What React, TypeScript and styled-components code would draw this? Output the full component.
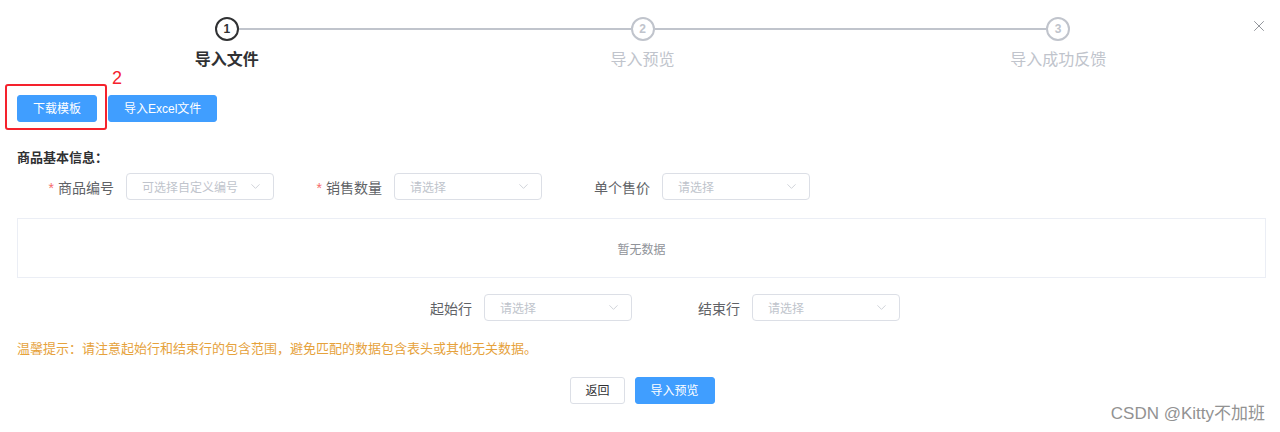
import React from 'react';
import styled, { createGlobalStyle } from 'styled-components';
import { ChevronDown, X } from 'lucide-react';

const GlobalStyle = createGlobalStyle`
  html, body {
    margin: 0;
    padding: 0;
    background: #fff;
  }
  body {
    font-family: "Liberation Sans", "Noto Sans CJK SC", sans-serif;
    color: #606266;
  }
`;

const Dialog = styled.div`
  position: relative;
  width: 1280px;
  height: 432px;
  box-sizing: border-box;
  padding: 0 14px 0 17px;
  overflow: hidden;
  background: #fff;
`;

const CloseBtn = styled.button`
  position: absolute;
  top: 17px;
  right: 12px;
  border: none;
  background: transparent;
  padding: 0;
  display: flex;
  color: #909399;
  cursor: pointer;
`;

const Steps = styled.div`
  display: grid;
  grid-template-columns: repeat(3, 1fr);
  margin: 0 0 0 2px;
  padding-top: 17px;
`;

const Step = styled.div`
  display: flex;
  flex-direction: column;
  align-items: center;
`;

const StepHead = styled.div`
  display: flex;
  align-items: center;
  width: 100%;
  height: 24px;
`;

const StepLine = styled.div<{ $off?: boolean }>`
  flex: 1;
  height: 2px;
  background: ${p => (p.$off ? 'transparent' : '#c0c4cc')};
`;

const StepIcon = styled.div<{ $active?: boolean }>`
  width: 24px;
  height: 24px;
  box-sizing: border-box;
  border-radius: 50%;
  border: 2px solid ${p => (p.$active ? '#303133' : '#c0c4cc')};
  color: ${p => (p.$active ? '#303133' : '#c0c4cc')};
  display: flex;
  align-items: center;
  justify-content: center;
  font-size: 12px;
  font-weight: 700;
  background: #fff;
`;

const StepTitle = styled.div<{ $active?: boolean }>`
  font-size: 16px;
  line-height: 38px;
  font-weight: ${p => (p.$active ? 700 : 400)};
  color: ${p => (p.$active ? '#303133' : '#c0c4cc')};
`;

const Toolbar = styled.div`
  display: flex;
  gap: 11px;
  margin-top: 16px;
`;

const Button = styled.button<{ $plain?: boolean }>`
  height: 27px;
  box-sizing: border-box;
  padding: 0 ${p => (p.$plain ? '14px' : '15px')};
  border-radius: 3px;
  font-family: inherit;
  font-size: 12px;
  line-height: 1;
  cursor: pointer;
  border: 1px solid ${p => (p.$plain ? '#dcdfe6' : '#409eff')};
  background: ${p => (p.$plain ? '#fff' : '#409eff')};
  color: ${p => (p.$plain ? '#303133' : '#fff')};
  white-space: nowrap;
`;

const Marked = styled.span`
  position: relative;
  display: inline-flex;
`;

const MarkBox = styled.span`
  position: absolute;
  top: -11px;
  left: -12px;
  right: -10px;
  bottom: -8px;
  border: 2px solid #f5222d;
  border-radius: 3px;
  pointer-events: none;
`;

const MarkNumber = styled.span`
  position: absolute;
  top: -27px;
  right: -25px;
  font-size: 18px;
  line-height: 20px;
  color: #f5222d;
`;

const SectionTitle = styled.div`
  margin-top: 28px;
  font-size: 13px;
  line-height: 16px;
  font-weight: 700;
  color: #303133;
`;

const FormRow = styled.div<{ $centered?: boolean }>`
  display: flex;
  align-items: center;
  margin-top: ${p => (p.$centered ? '16px' : '7px')};
  padding-left: ${p => (p.$centered ? '347px' : '0')};
  margin-left: ${p => (p.$centered ? '0' : '-11px')};
`;

const FormItem = styled.div<{ $labelWidth: number }>`
  display: flex;
  align-items: center;
  & > label {
    width: ${p => p.$labelWidth}px;
    box-sizing: border-box;
    padding-right: 12px;
    text-align: right;
    font-size: 14px;
    color: #606266;
    white-space: nowrap;
  }
`;

const Required = styled.span`
  color: #f56c6c;
  margin-right: 4px;
`;

const Select = styled.div`
  position: relative;
  width: 148px;
  height: 27px;
  box-sizing: border-box;
  border: 1px solid #dcdfe6;
  border-radius: 4px;
  display: flex;
  align-items: center;
  justify-content: space-between;
  padding: 0 10px 0 15px;
  font-size: 12px;
  color: #c0c4cc;
  background: #fff;
`;

const EmptyTable = styled.div`
  margin-top: 18px;
  height: 60px;
  box-sizing: border-box;
  border: 1px solid #ebeef5;
  display: flex;
  align-items: center;
  justify-content: center;
  font-size: 12px;
  color: #909399;
`;

const Tip = styled.div`
  margin-top: 18px;
  font-size: 13px;
  line-height: 20px;
  color: #e6a23c;
`;

const Footer = styled.div`
  display: flex;
  justify-content: center;
  gap: 10px;
  margin-top: 18px;
  padding-left: 2px;
`;

const Watermark = styled.div`
  position: absolute;
  right: 15px;
  bottom: 8px;
  font-size: 17px;
  color: #929292;
  text-shadow: 0 0 1px #fff;
  pointer-events: none;
`;

const steps = ['导入文件', '导入预览', '导入成功反馈'];

const SelectBox: React.FC<{ placeholder: string }> = ({ placeholder }) => (
  <Select>
    <span>{placeholder}</span>
    <ChevronDown size={15} strokeWidth={1.2} color="#c0c4cc" />
  </Select>
);

const App: React.FC = () => {
  const current = 0;
  return (
    <Dialog>
      <GlobalStyle />
      <CloseBtn aria-label="close">
        <X size={18} strokeWidth={1.3} />
      </CloseBtn>

      <Steps>
        {steps.map((title, i) => (
          <Step key={title}>
            <StepHead>
              <StepLine $off={i === 0} />
              <StepIcon $active={i === current}>{i + 1}</StepIcon>
              <StepLine $off={i === steps.length - 1} />
            </StepHead>
            <StepTitle $active={i === current}>{title}</StepTitle>
          </Step>
        ))}
      </Steps>

      <Toolbar>
        <Marked>
          <Button>下载模板</Button>
          <MarkBox />
          <MarkNumber>2</MarkNumber>
        </Marked>
        <Button>导入Excel文件</Button>
      </Toolbar>

      <SectionTitle>商品基本信息：</SectionTitle>
      <FormRow>
        <FormItem $labelWidth={120}>
          <label><Required>*</Required>商品编号</label>
          <SelectBox placeholder="可选择自定义编号" />
        </FormItem>
        <FormItem $labelWidth={120}>
          <label><Required>*</Required>销售数量</label>
          <SelectBox placeholder="请选择" />
        </FormItem>
        <FormItem $labelWidth={120}>
          <label>单个售价</label>
          <SelectBox placeholder="请选择" />
        </FormItem>
      </FormRow>

      <EmptyTable>暂无数据</EmptyTable>

      <FormRow $centered>
        <FormItem $labelWidth={120}>
          <label>起始行</label>
          <SelectBox placeholder="请选择" />
        </FormItem>
        <FormItem $labelWidth={120}>
          <label>结束行</label>
          <SelectBox placeholder="请选择" />
        </FormItem>
      </FormRow>

      <Tip>温馨提示：请注意起始行和结束行的包含范围，避免匹配的数据包含表头或其他无关数据。</Tip>

      <Footer>
        <Button $plain>返回</Button>
        <Button>导入预览</Button>
      </Footer>

      <Watermark>CSDN @Kitty不加班</Watermark>
    </Dialog>
  );
};

export default App;
